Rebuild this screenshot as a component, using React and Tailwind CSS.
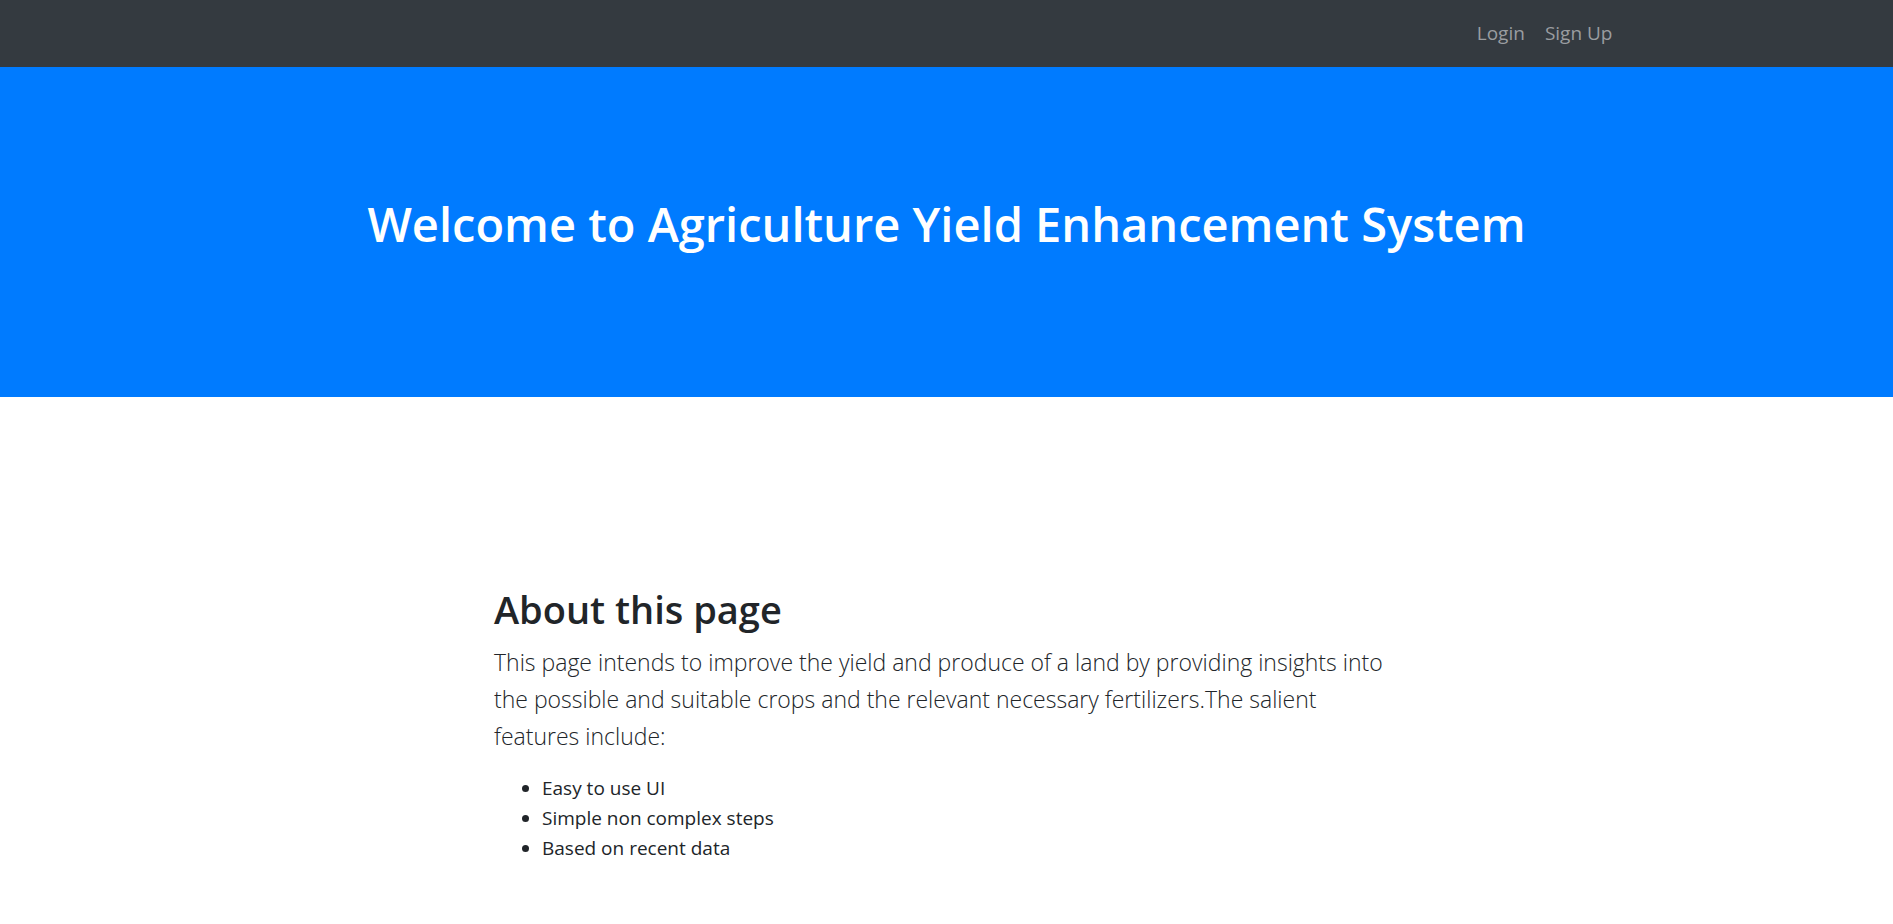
const features = ["Easy to use UI", "Simple non complex steps", "Based on recent data"];

const App = () => {
    return (
        <div className="min-h-[924px] bg-white text-[#212529]" style={{ fontFamily: '"Open Sans", "Noto Sans", sans-serif' }}>
            <nav className="h-[67px] bg-[#343a40]">
                <div className="mx-auto flex h-full w-[1368px] items-center justify-end px-[8px]">
                    <a href="#" className="px-[10px] text-[19px] text-[#9a9da0]">Login</a>
                    <a href="#" className="px-[10px] text-[19px] text-[#9a9da0]">Sign Up</a>
                </div>
            </nav>

            <header className="flex h-[330px] items-center justify-center bg-[#007bff] pb-[16px]">
                <h1 className="text-[47px] font-semibold leading-[1.2] text-white">
                    Welcome to Agriculture Yield Enhancement System
                </h1>
            </header>

            <main className="ml-[494px] w-[909px] pt-[190px]">
                <h2 className="mb-[11px] text-[38px] font-semibold leading-[1.2]">About this page</h2>
                <p className="text-[23px] font-light leading-[37px] text-[#212529]">
                    This page intends to improve the yield and produce of a land by providing insights into the possible and suitable crops and the relevant necessary fertilizers.The salient features include:
                </p>
                <ul className="mt-[18px] list-disc pl-[48px] text-[19px] leading-[30px]">
                    {features.map((item) => (
                        <li key={item}>{item}</li>
                    ))}
                </ul>
            </main>
        </div>
    );
};

export default App;
